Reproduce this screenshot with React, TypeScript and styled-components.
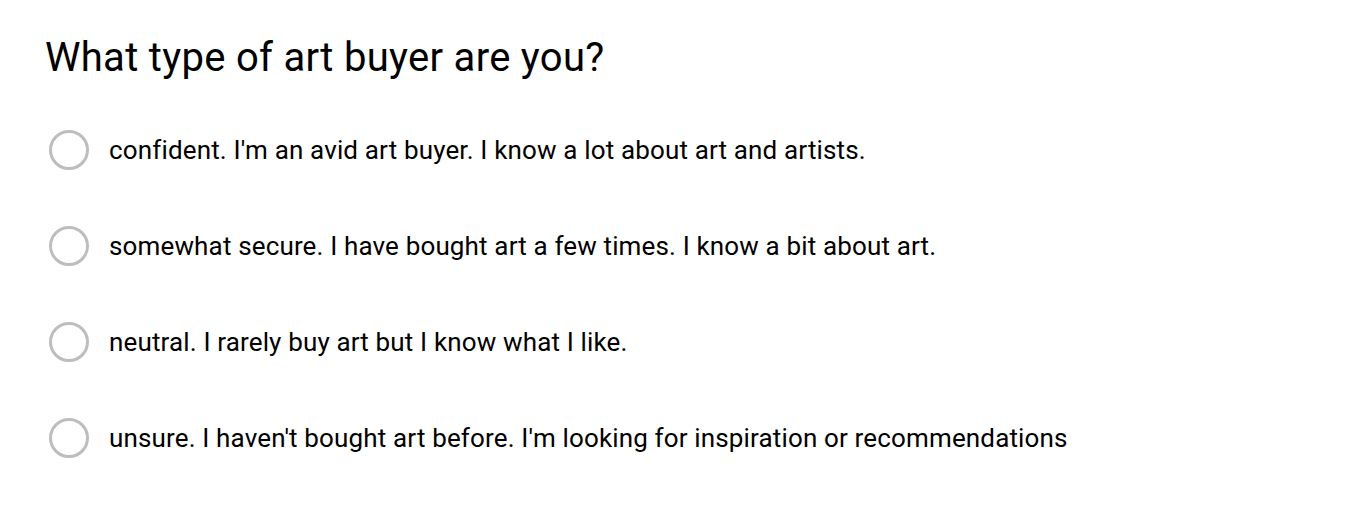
import React, {useState} from 'react';
import styled, {createGlobalStyle} from 'styled-components';

const options = [
  "confident. I'm an avid art buyer. I know a lot about art and artists.",
  'somewhat secure. I have bought art a few times. I know a bit about art.',
  'neutral. I rarely buy art but I know what I like.',
  "unsure. I haven't bought art before. I'm looking for inspiration or recommendations",
];

const App = () => {
  const [selected, setSelected] = useState<number | null>(null);

  return (
    <>
      <GlobalStyle />
      <Wrapper>
        <Title>What type of art buyer are you?</Title>
        <List>
          {options.map((label, i) => (
            <Option key={i} onClick={() => setSelected(i)}>
              <Radio $checked={selected === i} />
              <Label>{label}</Label>
            </Option>
          ))}
        </List>
      </Wrapper>
    </>
  );
};

const GlobalStyle = createGlobalStyle`
  body {
    margin: 0;
    background: #fff;
    font-family: Roboto, "Liberation Sans", sans-serif;
    color: #000;
  }
`;

const Wrapper = styled.div`
  display: flex;
  flex-direction: column;
  padding: 34px 0 0 45px;
`;

const Title = styled.h1`
  margin: 0;
  font-size: 40px;
  font-weight: 400;
  line-height: 48px;
  letter-spacing: 0.3px;
`;

const List = styled.div`
  display: flex;
  flex-direction: column;
  gap: 56px;
  margin-top: 48px;
  padding-left: 4px;
`;

const Option = styled.div`
  display: flex;
  align-items: center;
  gap: 20px;
  height: 40px;
  cursor: pointer;
`;

const Radio = styled.span<{$checked: boolean}>`
  box-sizing: border-box;
  width: 40px;
  height: 40px;
  border-radius: 50%;
  border: 3px solid ${({$checked}) => ($checked ? '#4285f4' : '#bdbdbd')};
  flex-shrink: 0;
`;

const Label = styled.span`
  font-size: 26px;
  line-height: 32px;
  letter-spacing: 0.15px;
`;

export default App;
